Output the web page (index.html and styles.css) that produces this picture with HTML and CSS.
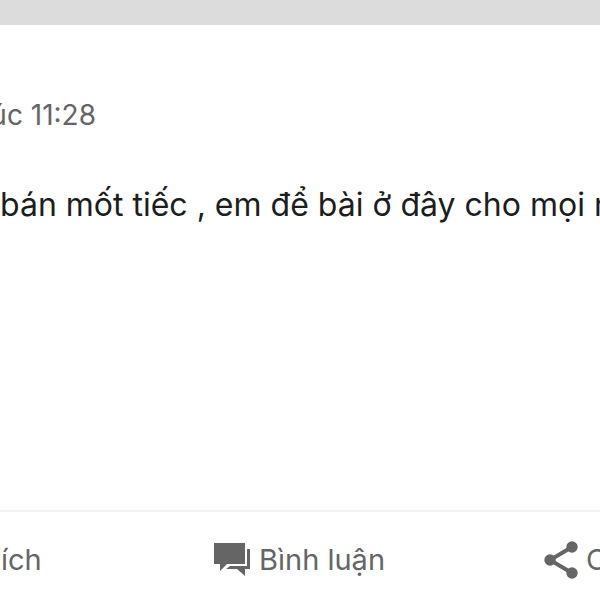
FILE: index.html
```html
<!DOCTYPE html>
<html lang="vi">
<head>
<meta charset="utf-8">
<meta name="viewport" content="width=device-width, initial-scale=1">
<title>Bình luận</title>
<link rel="stylesheet" href="styles.css">
</head>
<body>
<header class="topbar"></header>
<main class="post">
  <time class="time">úc 11:28</time>
  <p class="message">bán mốt tiếc , em để bài ở đây cho mọi n</p>
</main>
<footer class="actions">
  <button class="action like" type="button">ích</button>
  <button class="action comment" type="button">
    <svg class="icon" width="37" height="34" viewBox="0 0 37 34" fill="currentColor" aria-hidden="true">
      <path d="M0 0H31V21H13L6 28V21H0Z"/>
      <path d="M33 6H36V26H31V33L23 26H12L16 23H33Z"/>
    </svg>
    <span>Bình luận</span>
  </button>
  <button class="action share" type="button">
    <svg class="icon" width="34" height="38" viewBox="0 0 34 38" aria-hidden="true">
      <path d="M28 6L6 19L28 32" fill="none" stroke="currentColor" stroke-width="4"/>
      <g fill="currentColor"><circle cx="28" cy="6" r="5.7"/><circle cx="6" cy="19" r="5.7"/><circle cx="28" cy="32" r="5.7"/></g>
    </svg>
    <span>C</span>
  </button>
</footer>
</body>
</html>
```
FILE: styles.css
```css
* {
  box-sizing: border-box;
}

body {
  margin: 0;
  min-height: 100vh;
  display: flex;
  flex-direction: column;
  overflow: hidden;
  background: #fff;
  color: #1c1e1e;
  font-family: Inter, "Liberation Sans", sans-serif;
}

.topbar {
  height: 25px;
  background: #dcdcdc;
}

.post {
  flex: 1;
  padding-top: 70px;
}

.time {
  display: flex;
  justify-content: flex-end;
  width: 16%;
  overflow: hidden;
  color: #656565;
  font-size: 28px;
  line-height: 40px;
  white-space: nowrap;
}

.message {
  margin: 50px 0 0;
  overflow: hidden;
  font-size: 32px;
  line-height: 40px;
  white-space: nowrap;
}

.actions {
  display: grid;
  grid-template-columns: 213fr 330fr 57fr;
  height: 90px;
  border-top: 2px solid #f3f3f3;
}

.action {
  display: flex;
  align-items: center;
  gap: 8px;
  min-width: 0;
  padding: 8px 0 0 1px;
  border: 0;
  overflow: hidden;
  background: none;
  color: #656565;
  font: inherit;
  font-size: 29px;
  line-height: 40px;
  white-space: nowrap;
}

.action .icon {
  flex: none;
}
```
